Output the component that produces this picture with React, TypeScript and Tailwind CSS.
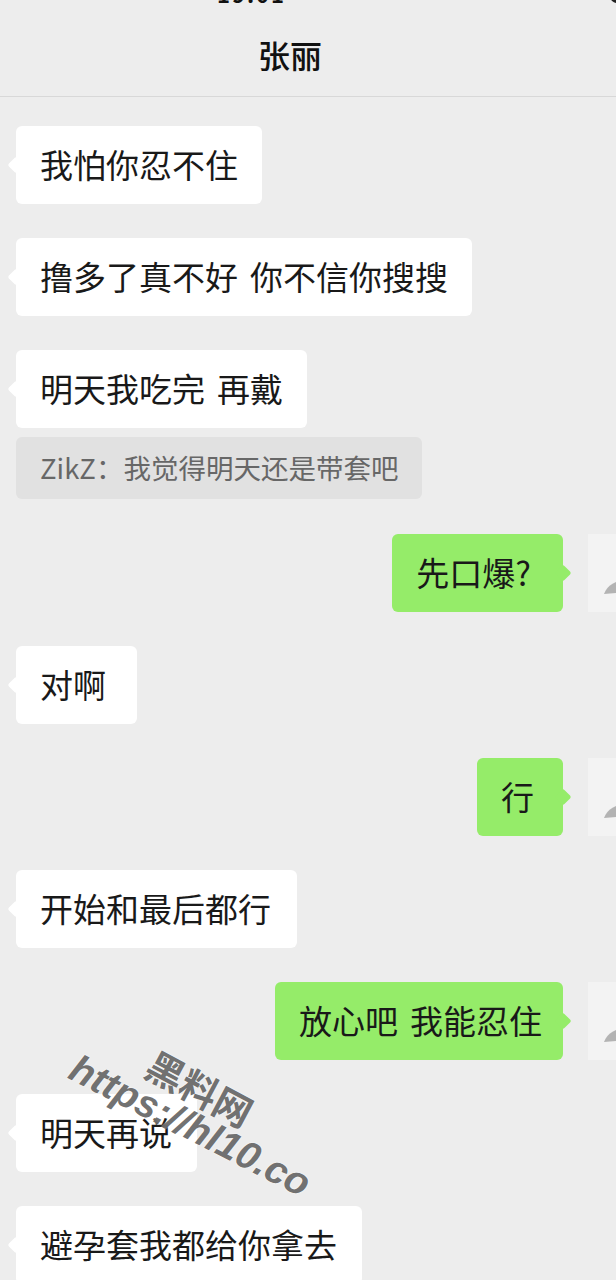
import React from "react";

const FONT = { fontFamily: '"Noto Sans CJK SC", "Noto Sans", sans-serif' };

function Txt({ text }: { text: string }) {
  const parts = text.split(" ");
  return (
    <span className="relative flex whitespace-pre">
      {parts.map((p, i) => (
        <React.Fragment key={i}>
          {i > 0 && <span className="inline-block w-[12px]" />}
          <span>{p}</span>
        </React.Fragment>
      ))}
    </span>
  );
}

function LeftBubble({ text, extra = 0 }: { text: string; extra?: number }) {
  return (
    <div className="flex">
      <div
        className="relative flex h-[78px] items-center rounded-[6px] bg-white pl-[24px] text-[33px] text-[#191919]"
        style={{ paddingRight: 24 + extra }}
      >
        <div className="absolute left-[-6px] top-[33px] h-[12px] w-[12px] rotate-45 rounded-[2px] bg-white" />
        <Txt text={text} />
      </div>
    </div>
  );
}

function Avatar() {
  return (
    <div className="h-[78px] w-[28px] shrink-0 overflow-hidden">
      <div className="h-[80px] w-[80px] bg-[#f3f3f3]">
        <svg width="28" height="80" viewBox="0 0 28 80">
          <path d="M16 60 C18 55 21 51 28 48 L28 59 Z" fill="#b3b3b3" />
        </svg>
      </div>
    </div>
  );
}

function RightBubble({ text, extra = 0 }: { text: string; extra?: number }) {
  return (
    <div className="flex justify-end">
      <div
        className="relative flex h-[78px] items-center rounded-[6px] bg-[#95ec69] pl-[24px] text-[33px] text-[#191919]"
        style={{ paddingRight: 24 + extra }}
      >
        <div className="absolute right-[-6px] top-[33px] h-[12px] w-[12px] rotate-45 rounded-[2px] bg-[#95ec69]" />
        <Txt text={text} />
      </div>
      <div className="w-[25px]" />
      <Avatar />
    </div>
  );
}

export default function App() {
  return (
    <div className="relative h-[1280px] w-[616px] overflow-hidden bg-[#ededed]" style={FONT}>
      {/* header */}
      <div className="relative h-[97px] border-b border-[#d8d8d8] bg-[#ededed]">
        <div className="absolute left-[217px] top-[-23px] text-[22px] font-bold tracking-[2px] text-[#111]">19:01</div>
        <div className="absolute right-[-8px] top-[-12px] h-[15px] w-[14px] rounded-full border-[3px] border-[#222]" />
        <div className="flex h-full items-center justify-center pr-[36px] pt-[12px]">
          <span className="text-[32px] font-medium text-[#111]">张丽</span>
        </div>
      </div>

      {/* messages */}
      <div className="flex flex-col pl-[16px] pt-[29px]">
        <LeftBubble text="我怕你忍不住" />
        <div className="h-[34px]" />
        <LeftBubble text="撸多了真不好 你不信你搜搜" />
        <div className="h-[34px]" />
        <LeftBubble text="明天我吃完 再戴" />
        <div className="h-[9px]" />
        <div className="flex">
          <div className="flex h-[62px] items-center rounded-[6px] bg-[#e1e1e1] px-[24px] text-[27.5px] text-[#676767]">
            ZikZ：我觉得明天还是带套吧
          </div>
        </div>
        <div className="h-[35px]" />
        <RightBubble text="先口爆?" extra={8} />
        <div className="h-[34px]" />
        <LeftBubble text="对啊" extra={7} />
        <div className="h-[34px]" />
        <RightBubble text="行" extra={5} />
        <div className="h-[34px]" />
        <LeftBubble text="开始和最后都行" extra={2} />
        <div className="h-[34px]" />
        <RightBubble text="放心吧 我能忍住" extra={-3} />
        <div className="h-[34px]" />
        <LeftBubble text="明天再说" extra={1} />
        <div className="h-[34px]" />
        <LeftBubble text="避孕套我都给你拿去" extra={1} />
      </div>

      {/* watermark */}
      <div
        className="pointer-events-none absolute left-[143px] top-[1066px] rotate-[28deg] text-[38px] font-bold leading-[44px] text-[#5e5e5e]/90"
        style={{ textShadow: "0 0 2px rgba(255,255,255,0.8)" }}
      >
        黑料网
      </div>
      <div
        className="pointer-events-none absolute left-[58px] top-[1104px] rotate-[27deg] whitespace-nowrap text-[39px] font-bold italic leading-[44px] text-[#5e5e5e]/90"
        style={{ fontFamily: '"Liberation Sans", Arial, sans-serif', textShadow: "0 0 2px rgba(255,255,255,0.8)" }}
      >
        https://hl10.co
      </div>
    </div>
  );
}
